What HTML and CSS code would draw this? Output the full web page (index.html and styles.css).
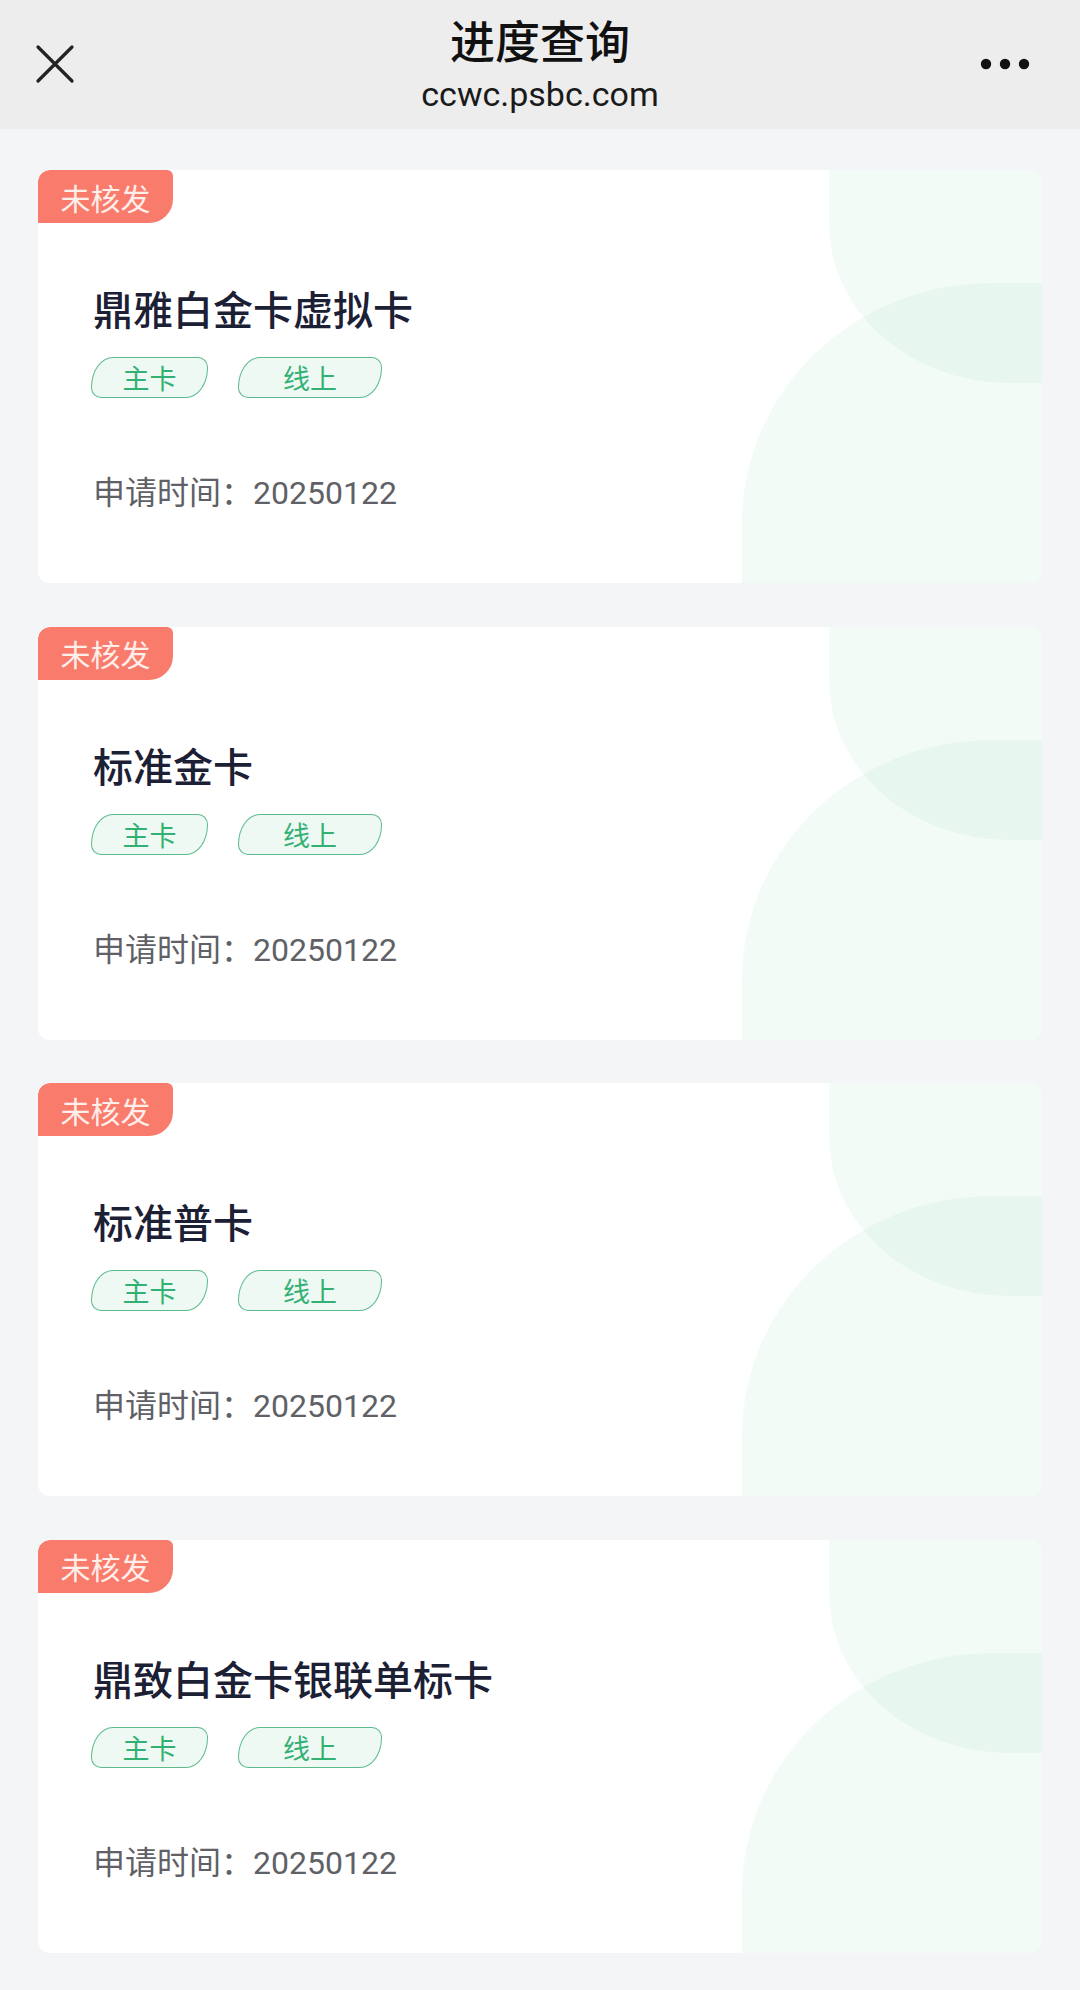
FILE: index.html
```html
<!DOCTYPE html>
<html lang="zh-CN">
<head>
<meta charset="utf-8">
<title>进度查询</title>
<link rel="stylesheet" href="styles.css">
</head>
<body>
<header class="navbar">
  <div class="nav-btn nav-left">
    <svg width="40" height="40" viewBox="0 0 40 40"><path d="M3 3 L37 37 M37 3 L3 37" stroke="#222" stroke-width="3.2" stroke-linecap="round" fill="none"/></svg>
  </div>
  <div class="nav-center">
    <div class="nav-title">进度查询</div>
    <div class="nav-sub">ccwc.psbc.com</div>
  </div>
  <div class="nav-btn nav-right">
    <svg width="50" height="12" viewBox="0 0 50 12"><circle cx="6" cy="6" r="5.2" fill="#111"/><circle cx="25" cy="6" r="5.2" fill="#111"/><circle cx="44" cy="6" r="5.2" fill="#111"/></svg>
  </div>
</header>
<main class="list">
  <section class="card">
    <span class="badge">未核发</span>
    <div class="card-body">
      <h2 class="card-title">鼎雅白金卡虚拟卡</h2>
      <div class="tags"><span class="tag tag-main">主卡</span><span class="tag tag-online">线上</span></div>
      <p class="date">申请时间：20250122</p>
    </div>
  </section>
  <section class="card">
    <span class="badge">未核发</span>
    <div class="card-body">
      <h2 class="card-title">标准金卡</h2>
      <div class="tags"><span class="tag tag-main">主卡</span><span class="tag tag-online">线上</span></div>
      <p class="date">申请时间：20250122</p>
    </div>
  </section>
  <section class="card">
    <span class="badge">未核发</span>
    <div class="card-body">
      <h2 class="card-title">标准普卡</h2>
      <div class="tags"><span class="tag tag-main">主卡</span><span class="tag tag-online">线上</span></div>
      <p class="date">申请时间：20250122</p>
    </div>
  </section>
  <section class="card">
    <span class="badge">未核发</span>
    <div class="card-body">
      <h2 class="card-title">鼎致白金卡银联单标卡</h2>
      <div class="tags"><span class="tag tag-main">主卡</span><span class="tag tag-online">线上</span></div>
      <p class="date">申请时间：20250122</p>
    </div>
  </section>
</main>
</body>
</html>
```
FILE: styles.css
```css
* { box-sizing: border-box; }
html, body { margin: 0; padding: 0; }
body {
  width: 1080px;
  min-height: 1990px;
  background: #f4f5f7;
  font-family: "Roboto", "Noto Sans CJK SC", sans-serif;
}
.navbar {
  height: 129px;
  background: #ededed;
  display: flex;
  align-items: flex-start;
  justify-content: space-between;
}
.nav-btn {
  width: 120px;
  height: 129px;
  display: flex;
  align-items: center;
  padding-bottom: 2px;
}
.nav-left { padding-left: 35px; }
.nav-right { justify-content: flex-end; padding-right: 50px; }
.nav-center {
  display: flex;
  flex-direction: column;
  align-items: center;
  padding-top: 14px;
}
.nav-title {
  font-family: "Noto Sans CJK SC", sans-serif;
  font-size: 45px;
  line-height: 52px;
  font-weight: 500;
  color: #111;
}
.nav-sub {
  font-size: 34px;
  line-height: 40px;
  margin-top: 8px;
  color: #1a1a1a;
}
.list {
  padding: 41px 38px 38px;
  display: flex;
  flex-direction: column;
  gap: 43.5px;
}
.card {
  position: relative;
  height: 413px;
  background: #fff;
  border-radius: 12px;
  overflow: hidden;
  display: flex;
  flex-direction: column;
  align-items: flex-start;
}
.card::before,
.card::after {
  content: "";
  position: absolute;
  right: 0;
  background: rgba(70, 200, 140, 0.065);
  pointer-events: none;
}
.card::before {
  top: 0;
  width: 213px;
  height: 213px;
  border-bottom-left-radius: 180px 160px;
}
.card::after {
  bottom: 0;
  width: 300px;
  height: 300px;
  border-top-left-radius: 250px 240px;
}
.badge {
  position: relative;
  z-index: 1;
  width: 135px;
  height: 53px;
  display: flex;
  align-items: center;
  justify-content: center;
  background: #f87b6c;
  color: #ffeeea;
  font-family: "Noto Sans CJK SC", sans-serif;
  font-size: 30px;
  border-radius: 12px 6px 24px 0;
}
.card-body {
  position: relative;
  z-index: 1;
  padding-left: 55px;
}
.card-title {
  margin: 61px 0 0;
  font-family: "Noto Sans CJK SC", sans-serif;
  font-size: 40px;
  line-height: 48px;
  font-weight: 500;
  color: #1c2035;
}
.tags {
  display: flex;
  gap: 30px;
  margin-top: 25px;
  margin-left: -2px;
}
.tag {
  height: 41px;
  display: flex;
  align-items: center;
  justify-content: center;
  border: 1.5px solid #5bbb8c;
  background: #eef9f3;
  color: #33b073;
  font-family: "Noto Sans CJK SC", sans-serif;
  font-size: 27px;
  border-radius: 22px 10px 22px 10px / 30px 10px 30px 10px;
}
.tag-main { width: 117px; }
.tag-online { width: 144px; }
.date {
  margin: 75px 0 0;
  font-size: 32px;
  line-height: 40px;
  color: #5f6166;
}
```
